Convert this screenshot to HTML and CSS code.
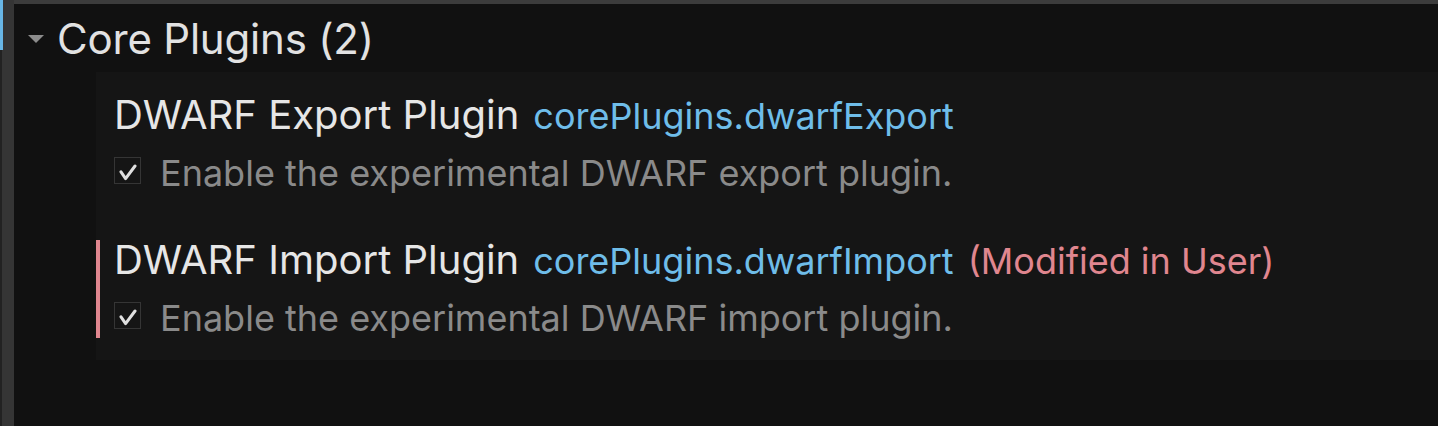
FILE: index.html
```html
<!DOCTYPE html>
<html lang="en">
<head>
<meta charset="UTF-8" />
<title>Settings - Core Plugins</title>
<link rel="stylesheet" href="styles.css">
</head>
<body>

<div class="strip">
  <div class="indicator"></div>
</div>

<div class="main">
  <div class="group-header">
    <span class="chevron"></span>
    <span class="group-title">Core Plugins (2)</span>
  </div>

  <div class="group">
    <div class="setting">
      <div class="setting-title">
        <span class="label">DWARF Export Plugin</span>
        <span class="key">corePlugins.dwarfExport</span>
      </div>
      <label class="setting-value">
        <span class="checkbox">
          <svg width="18" height="17" viewBox="0 0 18 17"><path d="M2 7.8 L6.6 14.6 L16 2" fill="none" stroke="#e0e0e0" stroke-width="3" stroke-linecap="round" stroke-linejoin="round"/></svg>
        </span>
        <span class="desc">Enable the experimental DWARF export plugin.</span>
      </label>
    </div>

    <div class="setting modified">
      <div class="setting-title">
        <span class="label">DWARF Import Plugin</span>
        <span class="key">corePlugins.dwarfImport</span>
        <span class="scope">(Modified in User)</span>
      </div>
      <label class="setting-value">
        <span class="checkbox">
          <svg width="18" height="17" viewBox="0 0 18 17"><path d="M2 7.8 L6.6 14.6 L16 2" fill="none" stroke="#e0e0e0" stroke-width="3" stroke-linecap="round" stroke-linejoin="round"/></svg>
        </span>
        <span class="desc">Enable the experimental DWARF import plugin.</span>
      </label>
    </div>
  </div>
</div>

</body>
</html>
```

FILE: styles.css
```css
body {
  margin: 0;
  height: 100vh;
  display: flex;
  background: #111111;
  font-family: Inter, 'Noto Sans', sans-serif;
  color: #e4e4e4;
  overflow: hidden;
}

.strip {
  width: 12px;
  flex-shrink: 0;
  background: #353535;
  border-left: 2px solid #222222;
}

.indicator {
  width: 3px;
  height: 50px;
  margin-left: -2px;
  background: #68b6e6;
}

.main {
  flex: 1;
  border-top: 4px solid #3c3c3c;
}

.group-header {
  display: flex;
  align-items: center;
  height: 68px;
  padding-left: 14px;
}

.chevron {
  width: 0;
  height: 0;
  border-left: 8px solid transparent;
  border-right: 8px solid transparent;
  border-top: 8px solid #8c8c8c;
  margin-right: 13px;
  margin-top: 2px;
}

.group-title {
  font-size: 42px;
  letter-spacing: -0.2px;
  color: #e2e2e2;
}

/* settings list, slightly lighter than the page */
.group {
  margin-left: 82px;
  background: #151515;
  padding: 23px 0 22px 0;
}

.setting {
  padding-left: 14px;
  border-left: 4px solid transparent;
}

.setting + .setting {
  margin-top: 47px;
}

.setting.modified {
  border-left-color: #e0868f;
}

.setting-title {
  display: flex;
  align-items: baseline;
  gap: 14px;
  font-size: 36px;
  line-height: 40px;
}

.label {
  font-size: 40px;
  color: #e6e6e6;
}

.key {
  color: #6fbde9;
}

.scope {
  color: #e0868f;
}

.setting-value {
  display: flex;
  align-items: flex-start;
  margin-top: 17px;
  gap: 19px;
}

.checkbox {
  width: 25px;
  height: 25px;
  margin-top: 4px;
  border: 1px solid #353535;
  display: flex;
  justify-content: center;
  align-items: flex-end;
}

.checkbox svg {
  margin-bottom: 2px;
}

.desc {
  font-size: 36px;
  line-height: 40px;
  color: #8a8a8a;
}
```
